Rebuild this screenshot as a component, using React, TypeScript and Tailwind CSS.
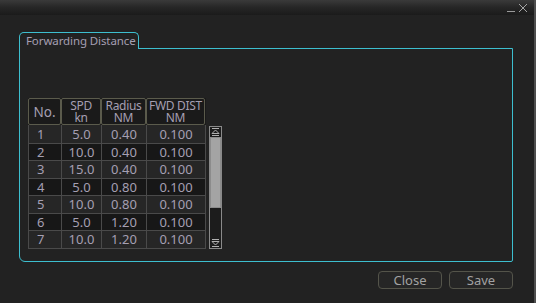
import React from "react";

const rows = [
  ["1", "5.0", "0.40", "0.100"],
  ["2", "10.0", "0.40", "0.100"],
  ["3", "15.0", "0.40", "0.100"],
  ["4", "5.0", "0.80", "0.100"],
  ["5", "10.0", "0.80", "0.100"],
  ["6", "5.0", "1.20", "0.100"],
  ["7", "10.0", "1.20", "0.100"],
];

const widths = ["w-[33px]", "w-[40px]", "w-[45px]", "w-[59px]"];

const ScrollArrow = ({ down }: { down?: boolean }) => (
  <svg width="11" height="10" viewBox="0 0 11 10" className={down ? "rotate-180" : ""}>
    <line x1="2" y1="1.5" x2="9" y2="1.5" stroke="#b0b0b0" strokeWidth="1" />
    <path d="M5.5 3 L9 6.5 L2 6.5 Z" fill="none" stroke="#b0b0b0" strokeWidth="1" />
    <line x1="2" y1="8.5" x2="9" y2="8.5" stroke="#b0b0b0" strokeWidth="1" />
  </svg>
);

const App = () => {
  return (
    <div
      className="w-[536px] h-[303px] bg-[#222222] flex flex-col border-r-[2px] border-[#4e4e4e] overflow-hidden text-[#a59fb2]"
      style={{ fontFamily: '"Noto Sans", "Open Sans", sans-serif' }}
    >
      {/* title bar */}
      <div className="h-[15px] bg-gradient-to-b from-[#3a3a3a] via-[#262626] to-[#1b1b1b] flex items-start justify-end pr-[6px] gap-[3px]">
        <div className="w-[8px] h-[1px] bg-[#9a9a9a] mt-[11px]" />
        <svg width="10" height="10" viewBox="0 0 10 10" className="mt-[3px]">
          <path d="M1 1 L9 9 M9 1 L1 9" stroke="#a5a5a5" strokeWidth="1" />
        </svg>
      </div>

      <div className="flex-1 pt-[17px] pl-[19px]">
        {/* tab */}
        <div className="relative z-10 w-[120px] h-[17px] -mb-[1px] bg-[#222222] border-t border-l border-r border-[#3dbfcf] rounded-t-[5px] pl-[6px] pt-[1px] text-[11.5px] leading-[14px] whitespace-nowrap tracking-[-0.1px]">
          Forwarding Distance
        </div>
        {/* panel */}
        <div className="w-[494px] h-[214px] border border-[#3dbfcf] rounded-bl-[6px] rounded-br-[2px] pl-[8px] pt-[49px] flex items-start">
          <div className="flex flex-col">
            <div className="flex h-[27px] bg-[#1a1a1a]">
              {["No.", "SPD\nkn", "Radius\nNM", "FWD DIST\nNM"].map((h, i) => (
                <div
                  key={i}
                  className={`${widths[i]} border border-[#5b5b4c] rounded-[2px] flex items-center justify-center text-center whitespace-pre ${
                    i === 0 ? "text-[13.5px] leading-[14px]" : "text-[12px] leading-[12px] tracking-[-0.3px]"
                  }`}
                >
                  {h}
                </div>
              ))}
            </div>
            <div className="border-l border-b border-[#4a4a4a]">
              {rows.map((r, ri) => (
                <div
                  key={ri}
                  className={`flex h-[17.5px] ${ri % 2 === 0 ? "bg-[#262626]" : "bg-[#171717]"} ${
                    ri > 0 ? "border-t border-[#4a4a4a]" : ""
                  }`}
                >
                  {r.map((c, ci) => (
                    <div
                      key={ci}
                      className={`${widths[ci]} border-r border-[#4a4a4a] flex items-center justify-center text-[13px] leading-[16px] ${
                        ci === 0 ? "justify-start pl-[8px]" : ""
                      }`}
                    >
                      {c}
                    </div>
                  ))}
                </div>
              ))}
            </div>
          </div>
          {/* scrollbar */}
          <div className="ml-[3px] mt-[28px] w-[13px] h-[123px] border border-[#8a8a8a] flex flex-col items-center bg-[#1c1c1c]">
            <div className="h-[10px] flex items-center">
              <ScrollArrow />
            </div>
            <div className="w-[11px] h-[71px] bg-[#a4a4a4] border border-[#8c8c8c]" />
            <div className="flex-1" />
            <div className="h-[10px] flex items-center">
              <ScrollArrow down />
            </div>
          </div>
        </div>

        {/* buttons */}
        <div className="w-[494px] flex justify-end gap-[7px] mt-[9px]">
          {["Close", "Save"].map((b) => (
            <div
              key={b}
              className="w-[64px] h-[18px] rounded-[4px] border border-[#54544a] bg-[#262626] flex items-center justify-center text-[13px] leading-[16px] text-[#a2a2a2]"
            >
              {b}
            </div>
          ))}
        </div>
      </div>
    </div>
  );
};

export default App;
